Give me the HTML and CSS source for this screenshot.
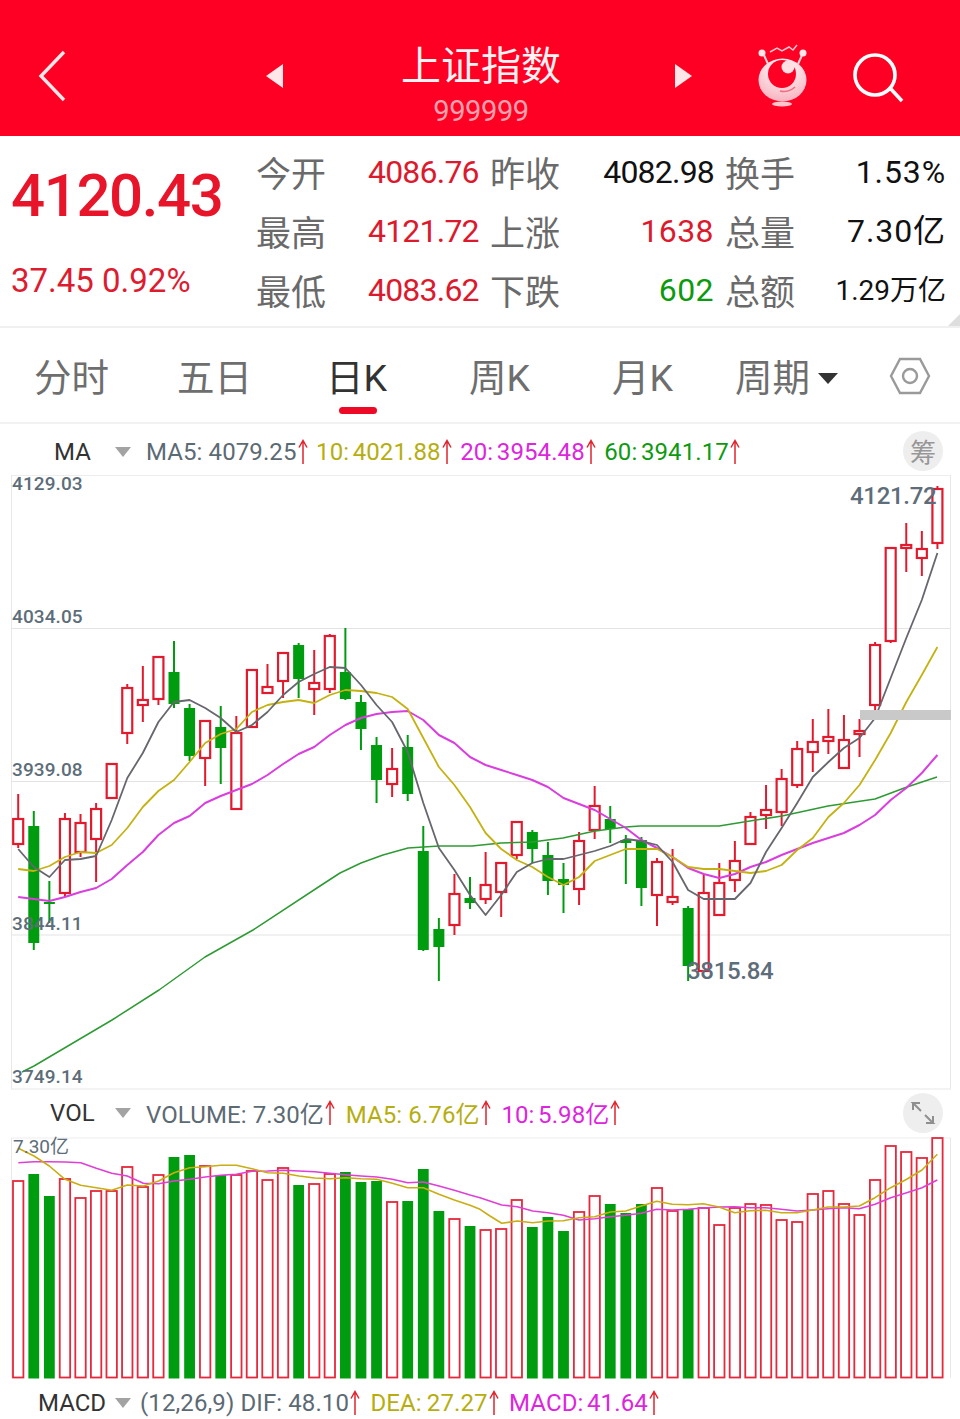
FILE: index.html
```html
<!DOCTYPE html>
<html lang="zh-CN">
<head>
<meta charset="utf-8">
<title>上证指数</title>
<link rel="stylesheet" href="styles.css">
</head>
<body>
<svg class="defs" width="0" height="0" aria-hidden="true">
  <symbol id="up" viewBox="0 0 10 26"><path d="M5 25V2M1 8.500L5 1.500l4 7" fill="none" stroke="#e0252f" stroke-width="1.500"/></symbol>
</svg>
<div class="page">
  <header class="topbar">
    <svg class="back" viewBox="0 0 32 54"><path d="M28 3 5 27l23 24" fill="none" stroke="#ffe6e8" stroke-width="3.400"/></svg>
    <span class="tri tri-left"></span>
    <div class="title-block">
      <div class="title">上证指数</div>
      <div class="code">999999</div>
    </div>
    <span class="tri tri-right"></span>
    <svg class="mascot" viewBox="0 0 58 66">
      <defs><radialGradient id="face" cx="50%" cy="25%" r="80%"><stop offset="0" stop-color="#fff"/><stop offset="1" stop-color="#f7aebb"/></radialGradient></defs>
      <path d="M9 9 14 20M49 9 44 20" stroke="#ffd5da" stroke-width="2"/>
      <circle cx="8" cy="9" r="3.500" fill="#ffe6e8"/><circle cx="49" cy="9" r="3.500" fill="#ffe6e8"/>
      <path d="M16 8 23 4 28 7 35 3 39 6 43 1" fill="none" stroke="#ffc4cc" stroke-width="1.500"/>
      <ellipse cx="28.500" cy="36" rx="24" ry="21.500" fill="url(#face)"/>
      <circle cx="28" cy="30" r="14" fill="#fe0024"/>
      <circle cx="34" cy="23" r="6.500" fill="#ffdfe3"/>
      <path d="M26 47q8 2 15-4" fill="none" stroke="#f56b80" stroke-width="1.500"/>
      <ellipse cx="28" cy="60" rx="10" ry="2.500" fill="#ffc4cc"/>
    </svg>
    <svg class="search" viewBox="0 0 56 56"><circle cx="25" cy="25" r="20" fill="none" stroke="#fff" stroke-width="3.600"/><path d="M40 38 52 51" stroke="#fff" stroke-width="3.600"/></svg>
  </header>

  <section class="stats">
    <div class="quote">
      <div class="price">4120.43</div>
      <div class="change">37.45 0.92%</div>
    </div>
    <div class="grid">
      <span class="lab">今开</span><span class="val red">4086.76</span><span class="lab">昨收</span><span class="val end black">4082.98</span><span class="lab lab3">换手</span><span class="val end black spaced">1.53%</span>
      <span class="lab">最高</span><span class="val red">4121.72</span><span class="lab">上涨</span><span class="val end red count">1638</span><span class="lab lab3">总量</span><span class="val end black spaced">7.30亿</span>
      <span class="lab">最低</span><span class="val red">4083.62</span><span class="lab">下跌</span><span class="val end green count">602</span><span class="lab lab3">总额</span><span class="val end black small">1.29万亿</span>
    </div>
    <span class="corner"></span>
  </section>

  <nav class="tabs">
    <span class="tab">分时</span>
    <span class="tab">五日</span>
    <span class="tab active">日K</span>
    <span class="tab">周K</span>
    <span class="tab">月K</span>
    <span class="tab period">周期<i class="caret-dark"></i></span>
    <svg class="hex" viewBox="0 0 42 38"><path d="M11 2H31L40 19 31 36H11L2 19Z" fill="none" stroke="#9a9a9a" stroke-width="2.400"/><circle cx="21" cy="19" r="7" fill="none" stroke="#9a9a9a" stroke-width="2.400"/></svg>
  </nav>

  <div class="ind ind-ma">
    <span class="ind-name name-ma">MA</span><i class="caret"></i>
    <span class="item slate">MA5: 4079.25</span><svg class="up"><use href="#up"/></svg>
    <span class="item ws2 olive">10: 4021.88</span><svg class="up"><use href="#up"/></svg>
    <span class="item ws2 pink">20: 3954.48</span><svg class="up"><use href="#up"/></svg>
    <span class="item ws2 leaf">60: 3941.17</span><svg class="up"><use href="#up"/></svg>
    <span class="round round-ma">筹</span>
  </div>

  <div class="chart chart-k">
    <svg id="kline" viewBox="11 475 940 615" width="940" height="615"></svg>
    <span class="axis a1">4129.03</span>
    <span class="axis a2">4034.05</span>
    <span class="axis a3">3939.08</span>
    <span class="axis a4">3844.11</span>
    <span class="axis a5">3749.14</span>
    <span class="mark m-high">4121.72</span>
    <span class="mark m-low">3815.84</span>
    <span class="grey-bar"></span>
  </div>

  <div class="ind ind-vol">
    <span class="ind-name name-vol">VOL</span><i class="caret"></i>
    <span class="item slate">VOLUME: 7.30亿</span><svg class="up"><use href="#up"/></svg>
    <span class="item olive">MA5: 6.76亿</span><svg class="up"><use href="#up"/></svg>
    <span class="item ws2 pink">10: 5.98亿</span><svg class="up"><use href="#up"/></svg>
    <span class="round round-vol"><svg viewBox="0 0 26 26" width="26" height="26"><path d="M3 10V3H10L3 3 11 11M23 16V23H16L23 23 15 15" fill="none" stroke="#8f8f8f" stroke-width="2"/></svg></span>
  </div>

  <div class="chart chart-v">
    <svg id="vol" viewBox="11 1136 940 242" width="940" height="242"></svg>
    <span class="axis vmax">7.30亿</span>
  </div>

  <div class="ind ind-macd">
    <span class="ind-name name-macd">MACD</span><i class="caret"></i>
    <span class="item slate">(12,26,9) DIF: 48.10</span><svg class="up"><use href="#up"/></svg>
    <span class="item ws1 olive">DEA: 27.27</span><svg class="up"><use href="#up"/></svg>
    <span class="item ws2 pink">MACD: 41.64</span><svg class="up"><use href="#up"/></svg>
  </div>
</div>
<script src="script.js"></script>
</body>
</html>
```
FILE: styles.css
```css
* { box-sizing: border-box; }
html, body { margin: 0; padding: 0; background: #fff; }
body { font-family: Roboto, "Noto Sans CJK SC", sans-serif; }
.defs { position: absolute; }
.page { width: 960px; height: 1419px; overflow: hidden; }

.topbar { height: 136px; background: #fe0024; display: flex; align-items: flex-start; }
.back { width: 32px; height: 54px; margin: 49px 0 0 36px; }
.tri { width: 0; height: 0; margin-top: 64px; border-top: 12px solid transparent; border-bottom: 12px solid transparent; }
.tri-left { margin-left: 198px; border-right: 17px solid #ffe6e8; }
.tri-right { margin-left: 94px; border-left: 17px solid #ffe6e8; }
.title-block { width: 200px; margin-left: 98px; text-align: center; }
.title { margin-top: 37px; height: 52px; line-height: 52px; font-size: 40px; color: #fff2f3; font-family: "Noto Sans CJK SC", sans-serif; }
.code { margin-top: 7px; height: 30px; line-height: 30px; font-size: 29px; letter-spacing: -.4px; color: #ffa2ae; }
.mascot { width: 58px; height: 66px; margin: 44px 0 0 62px; }
.search { width: 56px; height: 56px; margin: 50px 0 0 38px; }

.stats { position: relative; height: 192px; display: flex; border-bottom: 2px solid #f0f0f0; }
.quote { width: 257px; padding-left: 11px; }
.price { margin-top: 25px; height: 70px; line-height: 70px; font-size: 60px; font-weight: 500; color: #e8142a; letter-spacing: -1.400px; }
.change { margin-top: 30px; height: 40px; line-height: 40px; font-size: 33px; color: #de1c30; }
.grid { display: grid; grid-template-columns: 111px 123px 69px 154px 81px 151px; grid-auto-rows: 59px; padding-top: 8px; align-items: center; }
.lab { font-size: 35px; color: #6a6a6a; font-family: "Noto Sans CJK SC", sans-serif; line-height: 55px; white-space: nowrap; margin-left: -1px; padding-bottom: 4px; }
.lab3 { padding-left: 12px; }
.val { font-size: 32px; line-height: 57px; letter-spacing: -.8px; white-space: nowrap; padding-bottom: 2px; }
.end { text-align: right; }
.red { color: #dc1a2e; }
.black { color: #111; }
.spaced { letter-spacing: .9px; }
.count { letter-spacing: .4px; }
.black.small { font-size: 28px; letter-spacing: 0; }
.green { color: #0c9a0e; }
.corner { position: absolute; right: 0; bottom: 0; width: 0; height: 0; border-left: 12px solid transparent; border-bottom: 12px solid #dedede; }

.tabs { position: relative; height: 96px; padding-left: 35px; display: grid; grid-template-columns: 143px 149px 143px 143px 123px 153px 42px; align-items: center; border-bottom: 2px solid #f2f2f2; }
.tab { font-size: 37.500px; color: #6e6e6e; line-height: 50px; white-space: nowrap; margin-top: 6px; margin-left: -1px; }
.tab.active { color: #333; }
.tab.active::after { content: ""; position: absolute; left: 339px; top: 79px; width: 38px; height: 7px; border-radius: 4px; background: #ee0a26; }
.period { display: flex; align-items: center; }
.caret-dark { width: 0; height: 0; margin-left: 8px; border-left: 10px solid transparent; border-right: 10px solid transparent; border-top: 11px solid #333; }
.hex { width: 42px; height: 38px; margin-top: 2px; }

.ind { position: relative; display: flex; align-items: center; font-size: 24px; white-space: nowrap; }
.ind-ma { height: 51px; padding-top: 4px; }
.ind-vol { height: 47px; padding-bottom: 2px; }
.ind-macd { height: 40px; padding-top: 7px; }
.ind-name { color: #333; }
.name-ma { width: 115px; padding-left: 54px; }
.name-vol { width: 115px; padding-left: 50px; }
.name-macd { width: 115px; padding-left: 38px; }
.caret { width: 0; height: 0; margin-right: 15px; border-left: 8px solid transparent; border-right: 8px solid transparent; border-top: 10px solid #a3a3a3; }
.ind-macd .caret { margin-right: 9px; }
.item { letter-spacing: .1px; }
.ws1 { word-spacing: -1px; }
.ws2 { word-spacing: -2.500px; }
.up { width: 10px; height: 26px; margin: 0 8.500px 0 1px; flex: none; }
.ind-vol .up { margin-right: 10.800px; }
.ind-macd .up { margin-right: 10.500px; }
.slate { color: #5c6a74; }
.olive { color: #b6ae10; }
.pink { color: #dd25dd; }
.leaf { color: #0d9a10; }
.round { position: absolute; right: 17px; width: 40px; height: 40px; border-radius: 50%; background: #eee; color: #979797; font-size: 26px; display: flex; align-items: center; justify-content: center; font-family: "Noto Sans CJK SC", sans-serif; }
.round-ma { margin-top: -2px; }

.chart { position: relative; margin-left: 11px; width: 940px; }
.chart svg { display: block; }
.chart-k { height: 615px; }
.chart-v { height: 242px; }
.axis, .mark { position: absolute; color: #5d6d79; white-space: nowrap; font-weight: 500; }
.axis { left: 1px; font-size: 19px; line-height: 22px; letter-spacing: .1px; }
.a1 { top: -2px; }
.a2 { top: 131px; }
.a3 { top: 284px; }
.a4 { top: 438px; }
.a5 { top: 591px; }
.mark { font-size: 24px; line-height: 28px; letter-spacing: -.3px; }
.m-high { left: 839px; top: 7px; }
.m-low { left: 676px; top: 482px; }
.grey-bar { position: absolute; left: 849px; top: 235px; width: 91px; height: 10px; background: #c9c9c9; }
.vmax { left: 2px; top: -1px; font-size: 19px; letter-spacing: 0; font-weight: 400; }
```
FILE: script.js
```js
var NS = "http://www.w3.org/2000/svg";
var X0 = 18.2, DX = 15.58;
function xAt(i) { return X0 + DX * i; }
function el(parent, name, attrs) {
  var n = document.createElementNS(NS, name);
  for (var k in attrs) n.setAttribute(k, attrs[k]);
  parent.appendChild(n);
  return n;
}
var RED = "#e21a2e", GREEN = "#009c10";
// [type, high, top, bottom, low]: 1 rises (hollow), 0 falls (solid)
var candles = [
[1,794,819,844,848],[0,811,826,943,950],[0,881,902,904,923],[1,813,819,893,897],[1,814,823,852,857],
[1,803,809,839,882],[1,764,764,798,798],[1,684,688,733,744],[1,666,700,705,722],[1,657,657,699,705],
[0,641,672,704,708],[0,704,708,756,761],[1,721,721,758,786],[0,706,727,748,784],[1,716,733,809,809],
[1,669,670,727,727],[1,664,687,693,693],[1,653,653,681,698],[0,643,645,679,698],[1,650,683,689,715],
[1,634,636,689,693],[0,628,672,699,700],[0,695,702,729,750],[0,737,745,780,803],[1,748,769,784,797],
[0,735,747,794,801],[0,826,851,950,951],[0,918,929,947,981],[1,874,894,925,935],[0,877,898,903,909],
[1,852,885,899,904],[1,863,863,892,917],[1,822,822,855,859],[0,830,832,849,863],[0,842,855,881,895],
[0,863,879,885,913],[1,832,841,889,905],[1,786,806,830,839],[0,806,819,829,843],[0,835,840,843,884],
[0,837,840,888,906],[1,858,862,895,926],[1,849,897,902,905],[0,906,908,966,981],[1,874,893,971,971],
[1,863,883,915,915],[1,841,861,880,892],[1,812,817,844,844],[1,785,810,815,829],[1,769,779,812,826],
[1,741,749,785,788],[1,719,742,752,772],[1,709,737,741,754],[1,715,740,768,768],[1,719,731,734,757],
[1,642,645,705,711],[1,548,548,641,643],[1,523,545,548,572],[1,531,549,558,576],[1,486,489,543,549]
];
var ma5 = [849,867,877,860,859,856,820,778,753,722,702,700,708,718,732,725,712,695,682,674,667,668,685,705,722,752,803,848,870,895,915,895,872,863,859,859,855,851,846,839,841,845,862,890,899,899,899,883,852,828,803,777,762,748,738,718,678,638,600,553];
var ma10 = [869,871,866,857,852,853,845,828,807,791,780,762,743,734,729,712,705,702,700,703,695,690,691,693,697,709,738,767,785,807,833,849,860,867,877,885,877,861,855,849,849,849,857,867,869,869,871,873,871,865,850,838,817,803,785,760,733,702,675,647];
var ma20 = [897,899,901,897,892,888,879,865,852,835,823,816,803,796,790,784,775,764,754,747,735,725,718,714,712,711,720,735,743,757,765,770,775,780,787,798,804,810,819,828,840,848,857,868,874,878,874,867,862,855,849,843,838,833,825,815,800,788,773,755];
var ma60 = [[22,1072],[34,1066],[112,1020],[159,990],[205,957],[253,930],[320,886],[340,873],[361,863],[383,855],[408,848],[439,846],[472,846],[501,843],[532,842],[563,838],[595,831],[626,827],[640,826],[688,826],[719,826],[750,821],[782,816],[828,806],[875,799],[907,787],[937,777]];
var volTops = [1180,1173,1195,1178,1197,1190,1190,1166,1186,1174,1156,1154,1165,1174,1174,1170,1179,1167,1184,1183,1173,1171,1181,1180,1201,1200,1168,1210,1218,1225,1229,1228,1199,1226,1216,1230,1211,1195,1203,1212,1203,1187,1210,1208,1207,1224,1207,1203,1204,1219,1221,1193,1190,1203,1214,1179,1145,1151,1157,1137];
var upDay = candles.map(function (c) { return c[0]; });
var volMa5 = [55,157,102,180,148,210,195,250,242,268,289,275,335,283,382,267,430,270,476,255,522,230,569,215,616,212,662,208,709,208,756,218,803,230,850,232,897,240,944,246,990,248,1037,245,1083,248,1130,250,1177,262,1223,275,1270,275,1317,295,1363,312,1410,328,1440,340,1470,360,1505,382,1552,375,1598,380,1644,375,1690,374,1737,365,1784,362,1831,348,1877,345,1924,330,1970,316,2017,325,2064,326,2110,323,2157,333,2204,350,2250,344,2297,343,2344,350,2391,350,2438,342,2484,333,2531,333,2578,330,2625,305,2672,275,2720,250,2766,222,2812,175];
var volMa10 = [55,200,102,197,148,197,195,198,242,200,289,217,335,232,382,240,430,262,476,263,522,255,569,250,616,243,662,238,709,235,756,226,803,225,850,223,897,225,944,227,990,232,1037,236,1083,240,1130,243,1177,250,1223,260,1270,258,1317,270,1363,283,1410,297,1440,305,1505,327,1552,332,1598,345,1644,350,1690,358,1737,372,1784,368,1831,362,1877,358,1924,352,1970,340,2017,342,2064,340,2110,336,2157,333,2204,332,2250,335,2297,335,2344,340,2391,345,2438,342,2484,338,2531,335,2578,338,2625,325,2672,305,2720,290,2766,275,2812,252];

function line(svg, pts, color, w) {
  el(svg, "polyline", { points: pts.join(" "), fill: "none", stroke: color, "stroke-width": w, "stroke-linejoin": "round" });
}
function scaled(a) {
  var out = [];
  for (var i = 0; i < a.length; i += 2) out.push((a[i] / 3).toFixed(1) + "," + (a[i + 1] / 3 + 1095).toFixed(1));
  return out;
}
function byIndex(a) { return a.map(function (y, i) { return xAt(i).toFixed(1) + "," + y; }); }

var k = document.getElementById("kline");
[628.5, 781.5, 935, 1089].forEach(function (y) {
  el(k, "line", { x1: 11, x2: 951, y1: y, y2: y, stroke: y === 1089 ? "#e8e8e8" : "#e3e3e3", "stroke-width": 1.200 });
});
el(k, "line", { x1: 11, x2: 951, y1: 475.5, y2: 475.5, stroke: "#ededed", "stroke-width": 1 });
el(k, "line", { x1: 11.5, x2: 11.5, y1: 475, y2: 1089, stroke: "#e8e8e8", "stroke-width": 1 });
el(k, "line", { x1: 950.5, x2: 950.5, y1: 475, y2: 1089, stroke: "#e8e8e8", "stroke-width": 1 });

candles.forEach(function (c, i) {
  var x = xAt(i), col = c[0] ? RED : GREEN;
  if (c[1] < c[2]) el(k, "line", { x1: x, x2: x, y1: c[1], y2: c[2], stroke: col, "stroke-width": 2 });
  if (c[4] > c[3]) el(k, "line", { x1: x, x2: x, y1: c[3], y2: c[4], stroke: col, "stroke-width": 2 });
  if (c[0]) {
    el(k, "rect", { x: x - 5, y: c[2], width: 10, height: c[3] - c[2], fill: "none", stroke: col, "stroke-width": 2.200 });
  } else {
    el(k, "rect", { x: x - 5.5, y: c[2], width: 11, height: Math.max(c[3] - c[2], 2), fill: col });
  }
});
line(k, ma60.map(function (p) { return p.join(","); }), "#2e9a34", 1.500);
line(k, byIndex(ma20), "#d93ede", 2);
line(k, byIndex(ma10), "#c4b212", 1.800);
line(k, byIndex(ma5), "#66666e", 1.800);

var v = document.getElementById("vol");
el(v, "line", { x1: 11, x2: 951, y1: 1137, y2: 1137, stroke: "#ededed", "stroke-width": 1 });
el(v, "line", { x1: 11.5, x2: 11.5, y1: 1137, y2: 1377, stroke: "#e8e8e8", "stroke-width": 1 });
el(v, "line", { x1: 950.5, x2: 950.5, y1: 1137, y2: 1377, stroke: "#e8e8e8", "stroke-width": 1 });
volTops.forEach(function (t, i) {
  var x = xAt(i);
  if (upDay[i]) {
    el(v, "rect", { x: x - 5.2, y: t, width: 10.4, height: 1376.500 - t, fill: "none", stroke: "#e5283c", "stroke-width": 1.800 });
  } else {
    el(v, "rect", { x: x - 5.4, y: t, width: 10.8, height: 1377.500 - t, fill: GREEN });
  }
});
line(v, scaled(volMa10), "#e03fd6", 1.600);
line(v, scaled(volMa5), "#c9ad12", 1.600);
```
